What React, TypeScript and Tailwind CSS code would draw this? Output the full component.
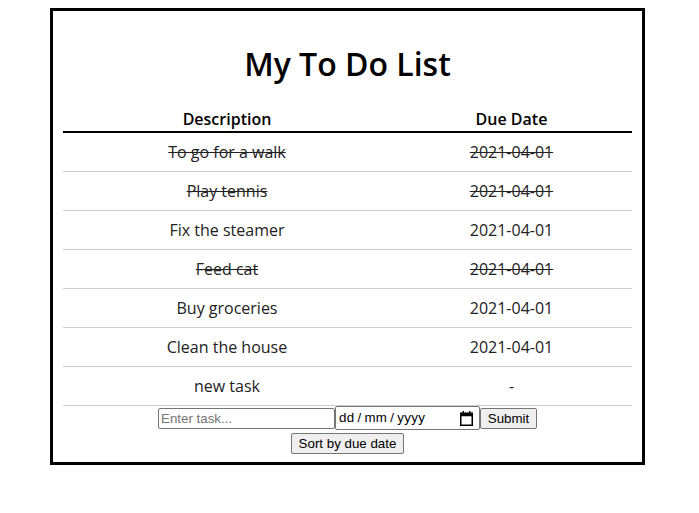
import React, { useState } from 'react';

type Task = { id: number; description: string; dueDate: string; done: boolean };

const INITIAL_TASKS: Task[] = [
  { id: 1, description: 'To go for a walk', dueDate: '2021-04-01', done: true },
  { id: 2, description: 'Play tennis', dueDate: '2021-04-01', done: true },
  { id: 3, description: 'Fix the steamer', dueDate: '2021-04-01', done: false },
  { id: 4, description: 'Feed cat', dueDate: '2021-04-01', done: true },
  { id: 5, description: 'Buy groceries', dueDate: '2021-04-01', done: false },
  { id: 6, description: 'Clean the house', dueDate: '2021-04-01', done: false },
  { id: 7, description: 'new task', dueDate: '-', done: false },
];

const CalendarIcon: React.FC = () => (
  <svg width="13" height="15" viewBox="0 0 13 15" fill="none">
    <rect x="0.75" y="2.25" width="11.5" height="12" stroke="black" strokeWidth="1.5" />
    <rect x="0.75" y="2.25" width="11.5" height="3" fill="black" />
    <rect x="2.5" y="0" width="1.5" height="3" fill="black" />
    <rect x="9" y="0" width="1.5" height="3" fill="black" />
  </svg>
);

const App: React.FC = () => {
  const [tasks, setTasks] = useState<Task[]>(INITIAL_TASKS);
  const [newTask, setNewTask] = useState('');

  const toggle = (id: number) =>
    setTasks((prev) => prev.map((t) => (t.id === id ? { ...t, done: !t.done } : t)));

  const handleSubmit = (e: React.FormEvent) => {
    e.preventDefault();
    if (!newTask.trim()) return;
    setTasks((prev) => [...prev, { id: Date.now(), description: newTask, dueDate: '-', done: false }]);
    setNewTask('');
  };

  const sortByDate = () =>
    setTasks((prev) => [...prev].sort((a, b) => a.dueDate.localeCompare(b.dueDate)));

  return (
    <div className="min-h-[513px] bg-white pt-[8px]">
      <div className="ml-[50px] box-border h-[457px] w-[595px] border-[3px] border-black p-[10px]">
        <h1 className="mt-[21px] mb-[20px] h-[44px] text-center font-['Open_Sans',sans-serif] text-[32px] font-semibold leading-[44px] text-black">
          My To Do List
        </h1>
        <table className="w-[569px] table-fixed border-collapse font-['Open_Sans',sans-serif] text-[16px] text-[#222]">
          <colgroup>
            <col className="w-[328px]" />
            <col className="w-[241px]" />
          </colgroup>
          <thead>
            <tr className="h-[26px] border-b-2 border-black">
              <th className="p-0 text-center font-semibold text-black">Description</th>
              <th className="p-0 text-center font-semibold text-black">Due Date</th>
            </tr>
          </thead>
          <tbody>
            {tasks.map((t) => (
              <tr
                key={t.id}
                onClick={() => toggle(t.id)}
                className="h-[39px] cursor-pointer border-b border-[#ccc]"
              >
                <td className={`p-0 text-center ${t.done ? 'line-through' : ''}`}>{t.description}</td>
                <td className={`p-0 text-center ${t.done ? 'line-through' : ''}`}>{t.dueDate}</td>
              </tr>
            ))}
          </tbody>
        </table>
        <form
          onSubmit={handleSubmit}
          className="flex flex-col items-center font-['Liberation_Sans',Arial,sans-serif] text-[13.33px] text-black"
        >
          <div className="flex h-[25px] items-center">
            <input
              type="text"
              value={newTask}
              onChange={(e) => setNewTask(e.target.value)}
              placeholder="Enter task..."
              className="box-border h-[21px] w-[177px] rounded-[2px] border border-[#767676] px-[2px] text-[13.33px] outline-none placeholder:text-[#757575]"
            />
            <div className="box-border flex h-[24px] w-[145px] items-center justify-between rounded-[2px] border border-[#767676] pl-[3px] pr-[6px]">
              <span className="flex items-center text-[13.33px] tracking-[0.3px]">
                dd<span className="mx-[3px]">/</span>mm<span className="mx-[3px]">/</span>yyyy
              </span>
              <CalendarIcon />
            </div>
            <button
              type="submit"
              className="box-border h-[21px] w-[57px] rounded-[2px] border border-[#767676] bg-[#efefef] text-[13.33px]"
            >
              Submit
            </button>
          </div>
          <button
            type="button"
            onClick={sortByDate}
            className="mt-[2px] box-border h-[21px] w-[113px] rounded-[2px] border border-[#767676] bg-[#efefef] text-[13.33px]"
          >
            Sort by due date
          </button>
        </form>
      </div>
    </div>
  );
};

export default App;
